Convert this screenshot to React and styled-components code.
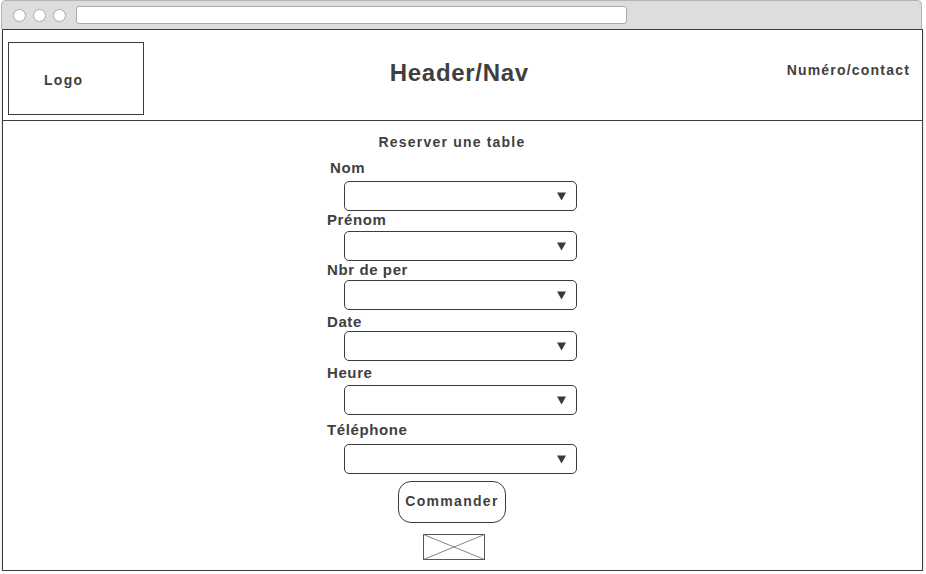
import styled, { createGlobalStyle } from "styled-components";

const GlobalStyle = createGlobalStyle`
    body {
        margin: 0;
        background: #fff;
        font-family: "Liberation Sans", Arial, sans-serif;
        color: #3f3f3f;
    }
`;

const Chrome = styled.div`
    box-sizing: border-box;
    margin-left: 1px;
    width: 921px;
    height: 29px;
    background: #dddddd;
    border: 1px solid #b4b4b4;
    border-bottom: none;
    border-radius: 5px 5px 0 0;
    display: flex;
    align-items: center;
    padding-left: 11px;
    gap: 7px;
`;

const Dot = styled.span`
    box-sizing: border-box;
    width: 13px;
    height: 13px;
    border-radius: 50%;
    background: #fff;
    border: 1px solid #a9a9a9;
`;

const UrlBar = styled.div`
    box-sizing: border-box;
    width: 551px;
    height: 18px;
    margin-left: 3px;
    background: #fff;
    border: 1px solid #a9a9a9;
    border-radius: 3px;
`;

const Frame = styled.div`
    box-sizing: border-box;
    margin-left: 2px;
    width: 921px;
    height: 542px;
    border: 1px solid #3c3c3c;
    box-shadow: 0 2px 3px rgba(0, 0, 0, 0.2);
    display: flex;
    flex-direction: column;
`;

const Header = styled.header`
    box-sizing: border-box;
    height: 91px;
    border-bottom: 1px solid #3c3c3c;
    display: flex;
    align-items: flex-start;
`;

const LogoBox = styled.div`
    box-sizing: border-box;
    width: 136px;
    height: 73px;
    margin: 12px 0 0 5px;
    border: 1px solid #3c3c3c;
    display: flex;
    align-items: center;
    padding: 2px 0 0 35px;
    font-size: 14px;
    font-weight: bold;
    letter-spacing: 1.3px;
`;

const NavTitle = styled.div`
    flex: 1;
    margin-top: 29px;
    padding-right: 12px;
    text-align: center;
    font-size: 24px;
    line-height: 28px;
    font-weight: bold;
    letter-spacing: 0.7px;
`;

const Contact = styled.div`
    margin: 32px 12px 0 0;
    font-size: 14px;
    line-height: 16px;
    font-weight: bold;
    letter-spacing: 1.2px;
`;

const Main = styled.main`
    flex: 1;
    padding: 13px 0 0 324px;
`;

const Form = styled.div`
    width: 250px;
    display: flex;
    flex-direction: column;
`;

const FormTitle = styled.div`
    text-align: center;
    font-size: 14px;
    line-height: 16px;
    font-weight: bold;
    letter-spacing: 1.2px;
`;

const Field = styled.div`
    margin-top: ${(p) => p.$top}px;
    display: flex;
    flex-direction: column;
`;

const Label = styled.label`
    padding-left: ${(p) => p.$indent || 0}px;
    font-size: 15px;
    line-height: 16px;
    font-weight: bold;
    letter-spacing: 0.6px;
`;

const Select = styled.div`
    box-sizing: border-box;
    margin: ${(p) => p.$gap}px 0 0 17px;
    width: 233px;
    height: 30px;
    border: 1px solid #3c3c3c;
    border-radius: 5px;
    background: #fff;
    display: flex;
    align-items: center;
    justify-content: flex-end;
    padding-right: 10px;
`;

const Button = styled.button`
    box-sizing: border-box;
    align-self: center;
    margin-top: 7px;
    width: 108px;
    height: 42px;
    border: 1px solid #3c3c3c;
    border-radius: 13px;
    background: #fff;
    color: #3f3f3f;
    font-family: "Liberation Sans", Arial, sans-serif;
    font-size: 14px;
    font-weight: bold;
    letter-spacing: 1.3px;
    padding: 0 0 3px 0;
`;

const Picture = styled.svg`
    display: block;
    align-self: center;
    margin: 11px 0 0 3px;
`;

const fields = [
    { label: "Nom", top: 10, gap: 5, indent: 3 },
    { label: "Prénom", top: 1, gap: 3 },
    { label: "Nbr de per", top: 1, gap: 2 },
    { label: "Date", top: 4, gap: 1 },
    { label: "Heure", top: 4, gap: 4 },
    { label: "Téléphone", top: 7, gap: 6 },
];

function Arrow() {
    return (
        <svg width="9" height="9" viewBox="0 0 9 9">
            <polygon points="0,0.5 9,0.5 4.5,8.5" fill="#3a3a3a" />
        </svg>
    );
}

export default function App() {
    return (
        <>
            <GlobalStyle />
            <Chrome>
                <Dot />
                <Dot />
                <Dot />
                <UrlBar />
            </Chrome>
            <Frame>
                <Header>
                    <LogoBox>Logo</LogoBox>
                    <NavTitle>Header/Nav</NavTitle>
                    <Contact>Numéro/contact</Contact>
                </Header>
                <Main>
                    <Form>
                        <FormTitle>Reserver une table</FormTitle>
                        {fields.map((f) => (
                            <Field key={f.label} $top={f.top}>
                                <Label $indent={f.indent}>{f.label}</Label>
                                <Select $gap={f.gap}>
                                    <Arrow />
                                </Select>
                            </Field>
                        ))}
                        <Button>Commander</Button>
                        <Picture width="62" height="26" viewBox="0 0 62 26">
                            <rect x="0.5" y="0.5" width="61" height="25" fill="#fff" stroke="#555" />
                            <line x1="0.5" y1="0.5" x2="61.5" y2="25.5" stroke="#666" strokeWidth="0.8" />
                            <line x1="61.5" y1="0.5" x2="0.5" y2="25.5" stroke="#666" strokeWidth="0.8" />
                        </Picture>
                    </Form>
                </Main>
            </Frame>
        </>
    );
}
